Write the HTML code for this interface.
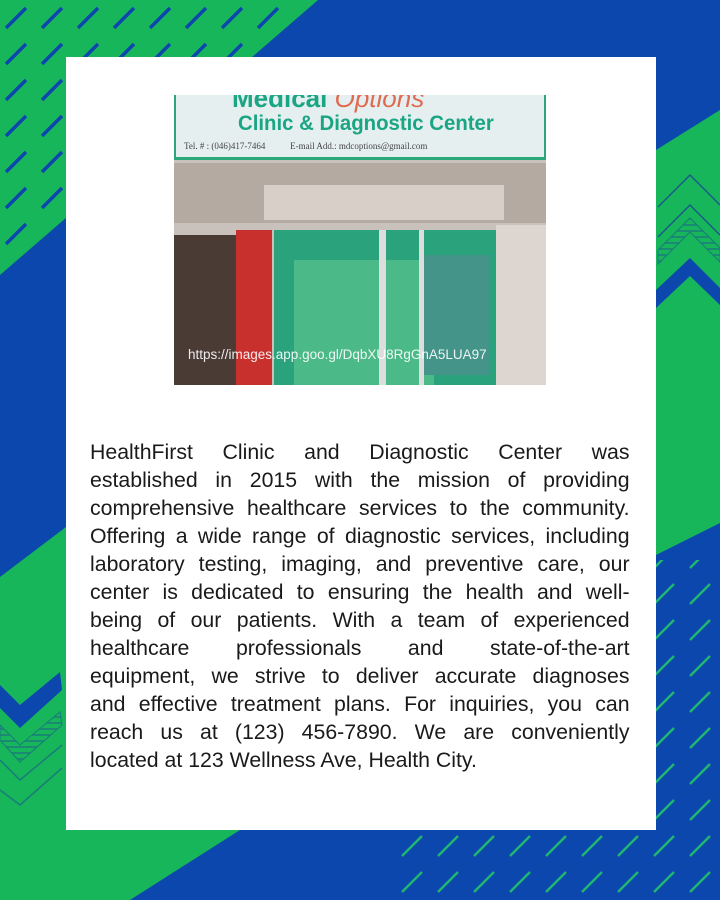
<!DOCTYPE html>
<html><head><meta charset="utf-8"><style>
*{margin:0;padding:0;box-sizing:border-box}
body{width:720px;height:900px;overflow:hidden;position:relative;background:#0c47ad;font-family:"Liberation Sans",sans-serif}
.abs{position:absolute}
.card{left:66px;top:57px;width:590px;height:773px;background:#fff}
.txt{left:90px;top:438px;width:545px;font-size:21.5px;line-height:28px;color:#1a1a1a;transform:scaleX(0.99);transform-origin:0 0}
.txt div{text-align:justify;text-align-last:justify;white-space:nowrap;height:28px}
.txt div.l{text-align-last:left}
</style></head><body>
<svg class="abs" style="left:0;top:0" width="720" height="900">
<defs>
<pattern id="dash" width="36" height="36" patternUnits="userSpaceOnUse">
<line x1="6" y1="28" x2="26" y2="8" stroke="#0c47ad" stroke-width="3.5"/>
</pattern>
<pattern id="dash2" width="36" height="36" patternUnits="userSpaceOnUse">
<line x1="6" y1="28" x2="26" y2="8" stroke="#1fb571" stroke-width="2.5"/>
</pattern>
<pattern id="hatch" width="6" height="6" patternUnits="userSpaceOnUse">
<line x1="0" y1="3" x2="6" y2="3" stroke="#1a7c7a" stroke-width="1.5"/>
</pattern>
</defs>
<polygon points="0,0 318,0 0,275" fill="#17b65a"/>
<polygon points="0,0 318,0 0,275" fill="url(#dash)"/>
<polygon points="656,150 720,110 720,523 656,555" fill="#17b65a"/>
<polygon points="0,577 66,527 66,830 240,830 130,900 0,900" fill="#17b65a"/>
<rect x="390" y="830" width="330" height="70" fill="url(#dash2)"/>
<rect x="656" y="560" width="64" height="270" fill="url(#dash2)"/>
<polyline points="658,207 690,175 720,205" fill="none" stroke="#1a5a8a" stroke-width="1.5"/>
<polyline points="658,237 690,205 720,235" fill="none" stroke="#1a5a8a" stroke-width="1.5"/>
<polygon points="658,250 690,218 720,248 720,262 690,232 658,264" fill="url(#hatch)" stroke="#1a7c7a"/>
<polygon points="656,290 690,258 720,288 720,305 690,276 656,308" fill="#0c47ad"/>
<polygon points="0,685 20,705 60,672 62,690 20,728 0,708" fill="#0c47ad"/>
<polygon points="0,725 20,745 60,712 62,725 20,762 0,740" fill="url(#hatch)" stroke="#1a7c7a"/>
<polyline points="0,760 20,780 62,745" fill="none" stroke="#1a7c7a" stroke-width="1.5"/>
<polyline points="0,790 20,805 62,768" fill="none" stroke="#1a7c7a" stroke-width="1.5"/>
</svg>
<div class="abs card"></div>
<div class="abs" style="left:174px;top:95px;width:372px;height:290px;background:#c9c2bc;overflow:hidden">
  <div class="abs" style="left:0;top:0;width:372px;height:65px;background:#e6efef;border-bottom:3px solid #2aa879;border-left:2px solid #2aa879;border-right:2px solid #2aa879"></div>
  <div class="abs" style="left:58px;top:-12px;font:bold 26px 'Liberation Sans';color:#1aa584">Medical <span style="color:#e06a50;font-style:italic;font-weight:normal">Options</span></div>
  <div class="abs" style="left:64px;top:17px;font:bold 21px 'Liberation Sans';color:#1aa584;transform:scaleX(0.97);transform-origin:0 0">Clinic &amp; Diagnostic Center</div>
  <div class="abs" style="left:10px;top:46px;font:9px 'Liberation Serif';color:#444">Tel. # : (046)417-7464 &nbsp;&nbsp;&nbsp;&nbsp;&nbsp;&nbsp;&nbsp;&nbsp;&nbsp; E-mail Add.: mdcoptions@gmail.com</div>
  <div class="abs" style="left:0;top:68px;width:372px;height:60px;background:#b5aaa2"></div>
  <div class="abs" style="left:90px;top:90px;width:240px;height:35px;background:#d8d0c8"></div>
  <div class="abs" style="left:0;top:140px;width:65px;height:150px;background:#4a3b35"></div>
  <div class="abs" style="left:62px;top:135px;width:36px;height:155px;background:#c8302e"></div>
  <div class="abs" style="left:100px;top:135px;width:222px;height:155px;background:#2aa27c"></div>
  <div class="abs" style="left:120px;top:165px;width:140px;height:125px;background:#4cba88"></div>
  <div class="abs" style="left:250px;top:160px;width:65px;height:120px;background:#44948a"></div>
  <div class="abs" style="left:205px;top:135px;width:7px;height:155px;background:#ddd"></div>
  <div class="abs" style="left:245px;top:135px;width:5px;height:155px;background:#ddd"></div>
  <div class="abs" style="left:322px;top:130px;width:50px;height:160px;background:#ddd5cf"></div>
  <div class="abs" style="left:14px;top:252px;width:360px;font:13.5px 'Liberation Sans';color:#fff;opacity:.9">https://images.app.goo.gl/DqbXU8RgGnA5LUA97</div>
</div>
<div class="abs txt">
<div>HealthFirst Clinic and Diagnostic Center was</div>
<div>established in 2015 with the mission of providing</div>
<div>comprehensive healthcare services to the community.</div>
<div>Offering a wide range of diagnostic services, including</div>
<div>laboratory testing, imaging, and preventive care, our</div>
<div>center is dedicated to ensuring the health and well-</div>
<div>being of our patients. With a team of experienced</div>
<div>healthcare professionals and state-of-the-art</div>
<div>equipment, we strive to deliver accurate diagnoses</div>
<div>and effective treatment plans. For inquiries, you can</div>
<div>reach us at (123) 456-7890. We are conveniently</div>
<div class="l">located at 123 Wellness Ave, Health City.</div>
</div>
</body></html>
